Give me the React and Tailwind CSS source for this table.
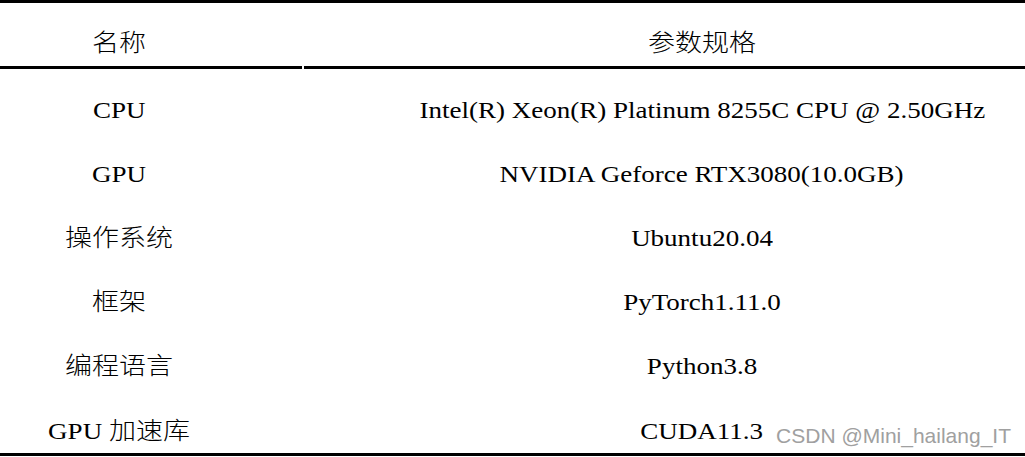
import React from "react";

const rows = [
  { name: "CPU", spec: "Intel(R) Xeon(R) Platinum 8255C CPU @ 2.50GHz" },
  { name: "GPU", spec: "NVIDIA Geforce RTX3080(10.0GB)" },
  { name: "操作系统", spec: "Ubuntu20.04" },
  { name: "框架", spec: "PyTorch1.11.0" },
  { name: "编程语言", spec: "Python3.8" },
  { name: "GPU 加速库", spec: "CUDA11.3" },
];

// the source image is stretched a bit wider than it is tall
function Txt({ children }) {
  return (
    <span className="inline-block scale-x-[1.125] font-light whitespace-nowrap">
      {children}
    </span>
  );
}

export default function App() {
  return (
    <div
      className="relative w-[1025px] h-[457px] overflow-hidden bg-white text-black"
      style={{ fontFamily: '"Liberation Serif", "Noto Sans CJK SC", serif' }}
    >
      {/* top rule */}
      <div className="h-[3px] bg-black" />

      {/* header */}
      <div className="flex h-[63px] text-[24px] leading-[32px]">
        <div className="w-[302px] pr-[64px] pt-[24px] text-center">
          <Txt>名称</Txt>
        </div>
        <div className="w-[2px]" />
        <div className="flex-1 pl-[75px] pt-[24px] text-center">
          <Txt>参数规格</Txt>
        </div>
      </div>

      {/* header rule */}
      <div className="flex h-[3px]">
        <div className="w-[302px] bg-black" />
        <div className="w-[2px] bg-white" />
        <div className="flex-1 bg-black" />
      </div>

      {/* body */}
      <div className="pt-[9px] text-[24px] leading-[32px]">
        {rows.map((r, i) => (
          <div
            key={r.name}
            className={
              i === rows.length - 1
                ? "flex h-[55px] pt-[17px]"
                : "flex h-16 items-center"
            }
          >
            <div className="w-[302px] pr-[64px] text-center">
              <Txt>{r.name}</Txt>
            </div>
            <div className="w-[2px]" />
            <div className="flex-1 pl-[75px] text-center">
              <Txt>{r.spec}</Txt>
            </div>
          </div>
        ))}
      </div>

      {/* bottom rule */}
      <div className="h-[3px] bg-black" />

      {/* watermark */}
      <div
        className="absolute right-[14px] top-[423px] text-[21px] leading-[26px] text-[#a0a0a0]"
        style={{ fontFamily: '"Liberation Sans", Arial, sans-serif' }}
      >
        CSDN @Mini_hailang_IT
      </div>
    </div>
  );
}
